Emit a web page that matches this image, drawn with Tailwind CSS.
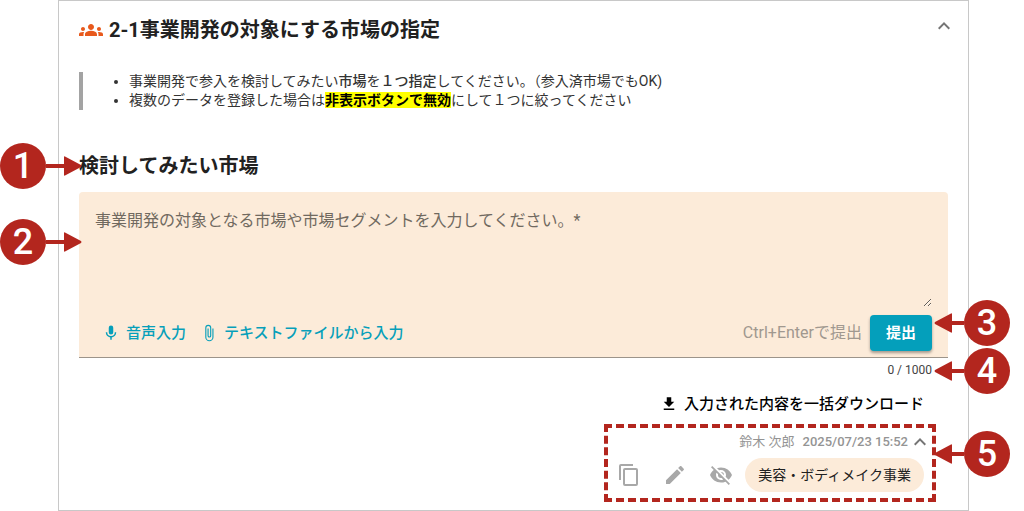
<!DOCTYPE html>
<html lang="ja">
<head>
  <meta charset="UTF-8" />
  <meta name="viewport" content="width=device-width, initial-scale=1" />
  <title>2-1事業開発の対象にする市場の指定</title>
  <script src="https://cdn.jsdelivr.net/npm/@tailwindcss/browser@4"></script>
</head>
<body class="bg-white font-[Roboto,'Noto_Sans_CJK_JP',sans-serif] text-[#212121]">
  <div class="pl-[58px] pr-[55px]">
    <main class="border border-[#c8c8c8] px-5 pb-2">

      <header class="flex items-center gap-1.5 pt-3">
        <svg class="size-6 shrink-0 fill-[#e8591c]" viewBox="0 0 24 24" aria-hidden="true"><path d="M12 12.75c1.63 0 3.07.39 4.24.9 1.08.48 1.76 1.56 1.76 2.73V18H6v-1.61c0-1.18.68-2.26 1.76-2.73 1.17-.52 2.61-.91 4.24-.91zM4 13c1.1 0 2-.9 2-2s-.9-2-2-2-2 .9-2 2 .9 2 2 2zm1.13 1.1c-.37-.06-.74-.1-1.13-.1-.99 0-1.93.21-2.78.58C.48 14.9 0 15.62 0 16.43V18h4.5v-1.61c0-.83.23-1.61.63-2.29zM20 13c1.1 0 2-.9 2-2s-.9-2-2-2-2 .9-2 2 .9 2 2 2zm4 3.43c0-.81-.48-1.53-1.22-1.85-.85-.37-1.79-.58-2.78-.58-.39 0-.76.04-1.13.1.4.68.63 1.46.63 2.29V18H24v-1.57zM12 6c1.66 0 3 1.34 3 3s-1.34 3-3 3-3-1.34-3-3 1.34-3 3-3z" /></svg>
        <h1 class="grow text-xl leading-[34px] font-bold">2-1事業開発の対象にする市場の指定</h1>
        <button type="button" class="-mr-2 mb-2" aria-label="折りたたむ">
          <svg class="size-6 fill-[#757575]" viewBox="0 0 24 24"><path d="M7.41,15.41L12,10.83L16.59,15.41L18,14L12,8L6,14L7.41,15.41Z" /></svg>
        </button>
      </header>

      <ul class="mt-[25px] list-disc border-l-4 border-[#a3a3a3] pl-[46px] text-sm leading-[19px] text-[#333]">
        <li>事業開発で参入を検討してみたい<strong class="font-medium">市場</strong>を<strong class="font-medium">１つ指定</strong>してください。（参入済市場でもOK)</li>
        <li>複数のデータを登録した場合は<strong class="bg-[#ff0] font-bold text-black">非表示ボタンで無効</strong>にして１つに絞ってください</li>
      </ul>

      <div class="relative mt-[42px]">
        <h2 class="text-xl leading-7 font-bold">検討してみたい市場</h2>
        <!-- callout 1 -->
        <div class="absolute top-1/2 -left-[79px] flex -translate-y-1/2 items-center">
          <span class="flex size-[46px] items-center justify-center rounded-full bg-[#b3261e] text-4xl font-medium text-white">1</span>
          <svg class="h-5 w-9 fill-[#b3261e]" viewBox="0 0 36 20" aria-hidden="true"><path d="M0 8h18V1q0-1 1-.6l16 8.600q1 1 0 2l-16 8.600q-1 .4-1-.6v-7H0z" /></svg>
        </div>
      </div>

      <form>
        <div class="relative mt-3 rounded-t border-b border-[#9c948a] bg-[#fcebd9] px-4 pt-[17px] pb-1.5">
          <textarea class="block h-[98px] w-full resize-y text-base leading-6 outline-none placeholder:text-[#70695f]" maxlength="1000" aria-label="市場や市場セグメント" placeholder="事業開発の対象となる市場や市場セグメントを入力してください。*"></textarea>
          <div class="mt-2 flex items-center gap-3.5 pl-[7px] text-[15px] leading-5 font-medium text-[#069fba]">
            <button type="button" class="flex items-center gap-1.5">
              <svg class="size-[18px] fill-current" viewBox="0 0 24 24" aria-hidden="true"><path d="M12,2A3,3 0 0,1 15,5V11A3,3 0 0,1 12,14A3,3 0 0,1 9,11V5A3,3 0 0,1 12,2M19,11C19,14.53 16.39,17.44 13,17.93V21H11V17.93C7.61,17.44 5,14.53 5,11H7A5,5 0 0,0 12,16A5,5 0 0,0 17,11H19Z" /></svg>
              音声入力
            </button>
            <button type="button" class="flex items-center gap-1.5">
              <svg class="size-[18px] fill-current" viewBox="0 0 24 24" aria-hidden="true"><path d="M16.5,6V17.5A4,4 0 0,1 12.5,21.5A4,4 0 0,1 8.5,17.5V5A2.5,2.5 0 0,1 11,2.5A2.5,2.5 0 0,1 13.5,5V15.5A1,1 0 0,1 12.5,16.5A1,1 0 0,1 11.5,15.5V6H10V15.5A2.5,2.5 0 0,0 12.5,18A2.5,2.5 0 0,0 15,15.5V5A4,4 0 0,0 11,1A4,4 0 0,0 7,5V17.5A5.5,5.5 0 0,0 12.5,23A5.5,5.5 0 0,0 18,17.5V6H16.5Z" /></svg>
              テキストファイルから入力
            </button>
            <div class="ml-auto flex items-center gap-2">
              <span class="text-base font-normal text-[#a0988f]">Ctrl+Enterで提出</span>
              <button type="submit" class="rounded bg-[#049fbb] px-4 py-2 font-bold text-white shadow-[0_2px_3px_rgba(0,0,0,0.35)]">提出</button>
            </div>
          </div>
          <!-- callout 2 -->
          <div class="absolute top-[27px] -left-[79px] flex items-center">
            <span class="flex size-[46px] items-center justify-center rounded-full bg-[#b3261e] text-4xl font-medium text-white">2</span>
            <svg class="h-5 w-9 fill-[#b3261e]" viewBox="0 0 36 20" aria-hidden="true"><path d="M0 8h18V1q0-1 1-.6l16 8.600q1 1 0 2l-16 8.600q-1 .4-1-.6v-7H0z" /></svg>
          </div>
          <!-- callout 3 -->
          <div class="absolute -right-[62px] bottom-[11px] flex items-center">
            <svg class="h-5 w-[30px] fill-[#b3261e]" viewBox="0 0 30 20" aria-hidden="true"><path d="M30 8H18V1q0-1-1-.6L1 9q-1 1 0 2l16 8.600q1 .4 1-.6v-7h12z" /></svg>
            <span class="flex size-[46px] items-center justify-center rounded-full bg-[#b3261e] text-4xl font-medium text-white">3</span>
          </div>
        </div>

        <div class="relative py-1 pr-4 text-right text-xs leading-4 text-[#444]">
          0 / 1000
          <!-- callout 4 -->
          <div class="absolute -right-[62px] -bottom-3 flex items-center">
            <svg class="h-5 w-[30px] fill-[#b3261e]" viewBox="0 0 30 20" aria-hidden="true"><path d="M30 8H18V1q0-1-1-.6L1 9q-1 1 0 2l16 8.600q1 .4 1-.6v-7h12z" /></svg>
            <span class="flex size-[46px] items-center justify-center rounded-full bg-[#b3261e] text-4xl font-medium text-white">4</span>
          </div>
        </div>
      </form>

      <div class="mt-3 flex justify-end pr-6">
        <button type="button" class="flex items-center gap-1.5 text-[15px] leading-5 font-medium text-black">
          <svg class="size-[18px] fill-current" viewBox="0 0 24 24" aria-hidden="true"><path d="M5,20H19V18H5M19,9H15V3H9V9H5L12,16L19,9Z" /></svg>
          入力された内容を一括ダウンロード
        </button>
      </div>

      <section class="relative mt-2.5 mr-3 ml-auto w-[332px] border-4 border-dashed border-[#b3261e] px-2 pt-0.5 pb-1.5">
        <div class="flex items-center justify-end gap-2 text-[#949494]">
          <span class="text-[13px] leading-5">鈴木 次郎</span>
          <time class="text-[13px] leading-5 font-medium" datetime="2025-07-23T15:52">2025/07/23 15:52</time>
          <button type="button" class="-mx-2" aria-label="閉じる">
            <svg class="size-6 fill-[#757575]" viewBox="0 0 24 24"><path d="M7.41,15.41L12,10.83L16.59,15.41L18,14L12,8L6,14L7.41,15.41Z" /></svg>
          </button>
        </div>
        <div class="mt-1 flex items-center justify-end">
          <div class="mr-3 flex gap-[22px]">
            <button type="button" aria-label="コピー">
              <svg class="size-6 fill-[#a8a8a8]" viewBox="0 0 24 24"><path d="M19,21H8V7H19M19,5H8A2,2 0 0,0 6,7V21A2,2 0 0,0 8,23H19A2,2 0 0,0 21,21V7A2,2 0 0,0 19,5M16,1H4A2,2 0 0,0 2,3V17H4V3H16V1Z" /></svg>
            </button>
            <button type="button" aria-label="編集">
              <svg class="size-6 fill-[#a8a8a8]" viewBox="0 0 24 24"><path d="M20.71,7.04C21.1,6.65 21.1,6 20.71,5.63L18.37,3.29C18,2.9 17.35,2.9 16.96,3.29L15.12,5.12L18.87,8.87M3,17.25V21H6.75L17.81,9.93L14.06,6.18L3,17.25Z" /></svg>
            </button>
            <button type="button" aria-label="非表示">
              <svg class="size-6 fill-[#a8a8a8]" viewBox="0 0 24 24"><path d="M11.83,9L15,12.16C15,12.11 15,12.05 15,12A3,3 0 0,0 12,9C11.94,9 11.89,9 11.83,9M7.53,9.8L9.08,11.35C9.03,11.56 9,11.77 9,12A3,3 0 0,0 12,15C12.22,15 12.44,14.97 12.65,14.92L14.2,16.47C13.53,16.8 12.79,17 12,17A5,5 0 0,1 7,12C7,11.21 7.2,10.47 7.53,9.8M2,4.27L4.28,6.55L4.73,7C3.08,8.3 1.78,10 1,12C2.73,16.39 7,19.5 12,19.5C13.55,19.5 15.03,19.2 16.38,18.66L16.81,19.08L19.73,22L21,20.73L3.27,3M12,7A5,5 0 0,1 17,12C17,12.64 16.87,13.26 16.64,13.82L19.57,16.75C21.07,15.5 22.27,13.86 23,12C21.27,7.61 17,4.5 12,4.5C10.6,4.5 9.26,4.75 8,5.2L10.17,7.35C10.74,7.13 11.35,7 12,7Z" /></svg>
            </button>
          </div>
          <p class="rounded-full bg-[#fcebd9] px-[13px] py-[7px] text-sm leading-5">美容・ボディメイク事業</p>
        </div>
        <!-- callout 5 -->
        <div class="absolute top-[3px] -right-[78px] flex items-center">
          <svg class="h-5 w-[30px] fill-[#b3261e]" viewBox="0 0 30 20" aria-hidden="true"><path d="M30 8H18V1q0-1-1-.6L1 9q-1 1 0 2l16 8.600q1 .4 1-.6v-7h12z" /></svg>
          <span class="flex size-[46px] items-center justify-center rounded-full bg-[#b3261e] text-4xl font-medium text-white">5</span>
        </div>
      </section>

    </main>
  </div>
</body>
</html>
